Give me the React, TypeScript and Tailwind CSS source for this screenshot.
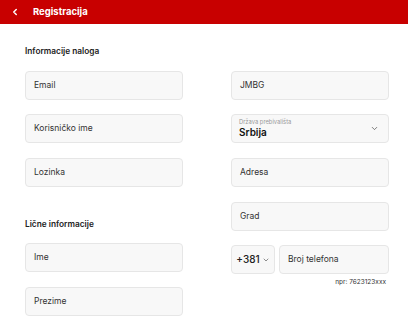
import { ChevronDown, ChevronLeft } from "lucide-react";

function Field({ label, className = "" }: { label: string; className?: string }) {
  return (
    <div
      className={`flex h-[29px] items-center rounded-[4px] border border-[#e6e6e6] bg-[#f8f8f8] px-[8px] text-[8.5px] text-[#333] ${className}`}
    >
      {label}
    </div>
  );
}

export default function App() {
  return (
    <div className="h-[323px] w-[408px] overflow-hidden bg-white font-['Inter',sans-serif]">
      <div className="flex h-[24px] items-center bg-[#c80000] pl-[10px] text-white">
        <ChevronLeft size={10} strokeWidth={3.5} />
        <span className="ml-[13px] text-[9.5px] font-bold">Registracija</span>
      </div>

      <div className="flex gap-[48px] pl-[25px]">
        <div className="flex w-[158px] flex-col">
          <h2 className="mt-[21px] h-[13px] text-[8.3px] leading-[13px] font-semibold text-[#222]">
            Informacije naloga
          </h2>
          <Field label="Email" className="mt-[13px]" />
          <Field label="Korisničko ime" className="mt-[14px]" />
          <Field label="Lozinka" className="mt-[15px]" />
          <h2 className="mt-[31px] h-[13px] text-[8.3px] leading-[13px] font-semibold text-[#222]">
            Lične informacije
          </h2>
          <Field label="Ime" className="mt-[12px]" />
          <Field label="Prezime" className="mt-[15px]" />
        </div>

        <div className="flex w-[158px] flex-col">
          <Field label="JMBG" className="mt-[47px]" />
          <div className="mt-[14px] flex h-[29px] items-center justify-between rounded-[4px] border border-[#e6e6e6] bg-[#f8f8f8] pr-[9px] pl-[7px]">
            <div className="flex flex-col">
              <span className="text-[5.8px] leading-[8px] text-[#999]">Država prebivališta</span>
              <span className="text-[10px] leading-[13px] font-semibold text-[#111]">Srbija</span>
            </div>
            <ChevronDown size={9} strokeWidth={2} className="text-[#555]" />
          </div>
          <Field label="Adresa" className="mt-[15px]" />
          <Field label="Grad" className="mt-[15px]" />
          <div className="mt-[14px] flex gap-[4px]">
            <div className="flex h-[29px] w-[44px] items-center justify-center gap-[2px] rounded-[4px] border border-[#e6e6e6] bg-[#f8f8f8]">
              <span className="text-[10px] font-medium text-[#222]">+381</span>
              <ChevronDown size={8} strokeWidth={2} className="text-[#555]" />
            </div>
            <Field label="Broj telefona" className="flex-1" />
          </div>
          <div className="mt-[4px] pr-[3px] text-right text-[6.5px] text-[#333]">npr: 7623123xxx</div>
        </div>
      </div>
    </div>
  );
}
